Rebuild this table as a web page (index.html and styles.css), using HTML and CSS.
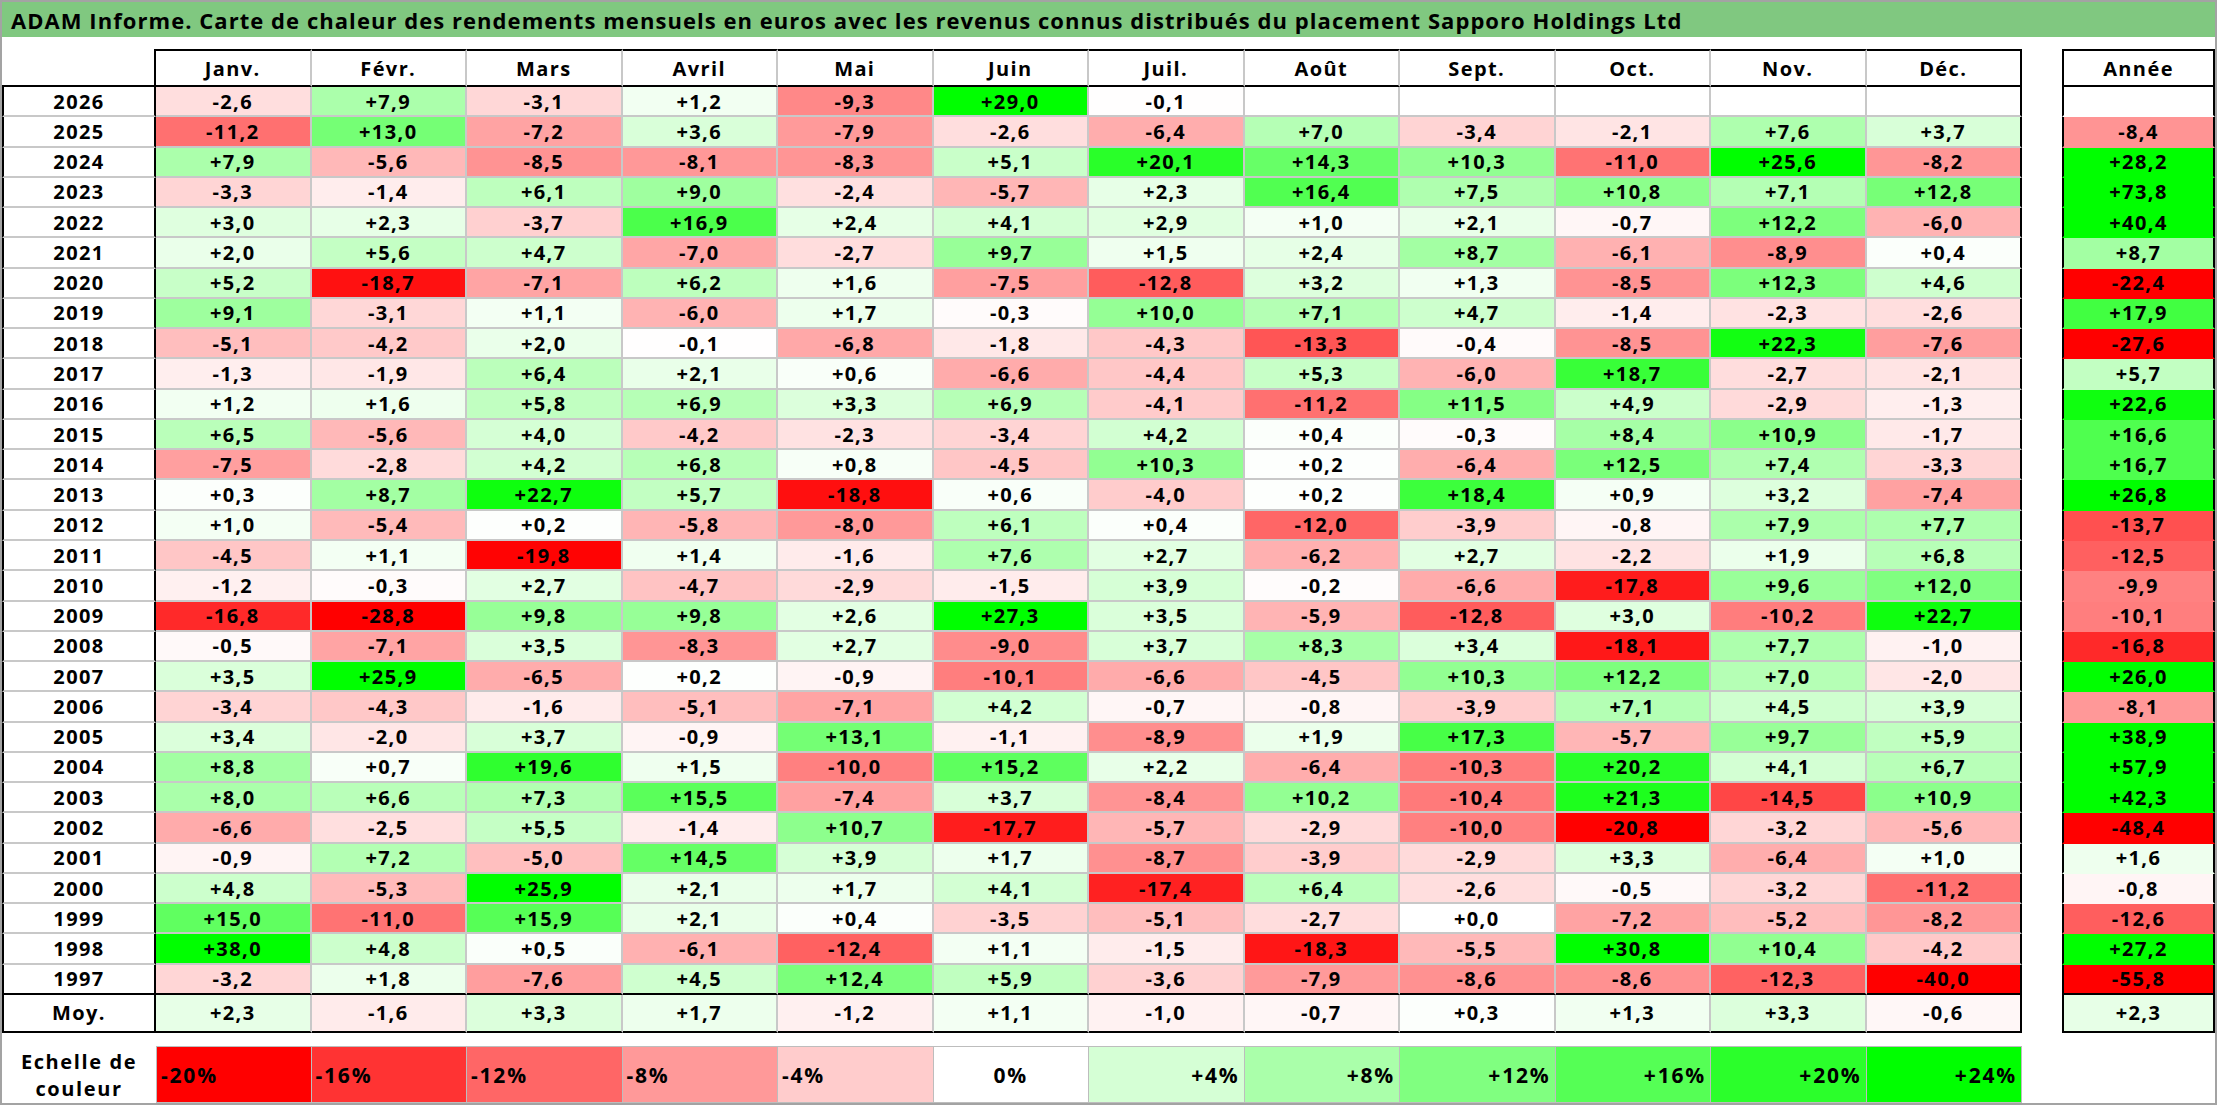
FILE: index.html
```html
<!DOCTYPE html>
<html lang="fr">
<head>
<meta charset="utf-8">
<title>ADAM Informe - Sapporo Holdings Ltd</title>
<link rel="stylesheet" href="styles.css">
</head>
<body>
<div class="page">
  <div class="title">ADAM Informe. Carte de chaleur des rendements mensuels en euros avec les revenus connus distribués du placement Sapporo Holdings Ltd</div>
  <div class="board">
    <div class="row hdr"><div class="cell yr"></div><div class="cell">Janv.</div><div class="cell">Févr.</div><div class="cell">Mars</div><div class="cell">Avril</div><div class="cell">Mai</div><div class="cell">Juin</div><div class="cell">Juil.</div><div class="cell">Août</div><div class="cell">Sept.</div><div class="cell">Oct.</div><div class="cell">Nov.</div><div class="cell">Déc.</div><div class="cell an">Année</div></div>
    <div class="row"><div class="cell yr">2026</div><div class="cell" style="background:rgb(255,222,222)">-2,6</div><div class="cell" style="background:rgb(171,255,171)">+7,9</div><div class="cell" style="background:rgb(255,215,215)">-3,1</div><div class="cell" style="background:rgb(242,255,242)">+1,2</div><div class="cell" style="background:rgb(255,136,136)">-9,3</div><div class="cell" style="background:rgb(0,255,0)">+29,0</div><div class="cell" style="background:rgb(255,254,254)">-0,1</div><div class="cell"></div><div class="cell"></div><div class="cell"></div><div class="cell"></div><div class="cell"></div><div class="cell an"></div></div>
    <div class="row"><div class="cell yr">2025</div><div class="cell" style="background:rgb(255,112,112)">-11,2</div><div class="cell" style="background:rgb(117,255,117)">+13,0</div><div class="cell" style="background:rgb(255,163,163)">-7,2</div><div class="cell" style="background:rgb(217,255,217)">+3,6</div><div class="cell" style="background:rgb(255,154,154)">-7,9</div><div class="cell" style="background:rgb(255,222,222)">-2,6</div><div class="cell" style="background:rgb(255,173,173)">-6,4</div><div class="cell" style="background:rgb(181,255,181)">+7,0</div><div class="cell" style="background:rgb(255,212,212)">-3,4</div><div class="cell" style="background:rgb(255,228,228)">-2,1</div><div class="cell" style="background:rgb(174,255,174)">+7,6</div><div class="cell" style="background:rgb(216,255,216)">+3,7</div><div class="cell an" style="background:rgb(255,148,148)">-8,4</div></div>
    <div class="row"><div class="cell yr">2024</div><div class="cell" style="background:rgb(171,255,171)">+7,9</div><div class="cell" style="background:rgb(255,184,184)">-5,6</div><div class="cell" style="background:rgb(255,147,147)">-8,5</div><div class="cell" style="background:rgb(255,152,152)">-8,1</div><div class="cell" style="background:rgb(255,149,149)">-8,3</div><div class="cell" style="background:rgb(201,255,201)">+5,1</div><div class="cell" style="background:rgb(41,255,41)">+20,1</div><div class="cell" style="background:rgb(103,255,103)">+14,3</div><div class="cell" style="background:rgb(146,255,146)">+10,3</div><div class="cell" style="background:rgb(255,115,115)">-11,0</div><div class="cell" style="background:rgb(0,255,0)">+25,6</div><div class="cell" style="background:rgb(255,150,150)">-8,2</div><div class="cell an" style="background:rgb(0,255,0)">+28,2</div></div>
    <div class="row"><div class="cell yr">2023</div><div class="cell" style="background:rgb(255,213,213)">-3,3</div><div class="cell" style="background:rgb(255,237,237)">-1,4</div><div class="cell" style="background:rgb(190,255,190)">+6,1</div><div class="cell" style="background:rgb(159,255,159)">+9,0</div><div class="cell" style="background:rgb(255,224,224)">-2,4</div><div class="cell" style="background:rgb(255,182,182)">-5,7</div><div class="cell" style="background:rgb(231,255,231)">+2,3</div><div class="cell" style="background:rgb(81,255,81)">+16,4</div><div class="cell" style="background:rgb(175,255,175)">+7,5</div><div class="cell" style="background:rgb(140,255,140)">+10,8</div><div class="cell" style="background:rgb(180,255,180)">+7,1</div><div class="cell" style="background:rgb(119,255,119)">+12,8</div><div class="cell an" style="background:rgb(0,255,0)">+73,8</div></div>
    <div class="row"><div class="cell yr">2022</div><div class="cell" style="background:rgb(223,255,223)">+3,0</div><div class="cell" style="background:rgb(231,255,231)">+2,3</div><div class="cell" style="background:rgb(255,208,208)">-3,7</div><div class="cell" style="background:rgb(75,255,75)">+16,9</div><div class="cell" style="background:rgb(230,255,230)">+2,4</div><div class="cell" style="background:rgb(211,255,211)">+4,1</div><div class="cell" style="background:rgb(224,255,224)">+2,9</div><div class="cell" style="background:rgb(244,255,244)">+1,0</div><div class="cell" style="background:rgb(233,255,233)">+2,1</div><div class="cell" style="background:rgb(255,246,246)">-0,7</div><div class="cell" style="background:rgb(125,255,125)">+12,2</div><div class="cell" style="background:rgb(255,179,179)">-6,0</div><div class="cell an" style="background:rgb(0,255,0)">+40,4</div></div>
    <div class="row"><div class="cell yr">2021</div><div class="cell" style="background:rgb(234,255,234)">+2,0</div><div class="cell" style="background:rgb(196,255,196)">+5,6</div><div class="cell" style="background:rgb(205,255,205)">+4,7</div><div class="cell" style="background:rgb(255,166,166)">-7,0</div><div class="cell" style="background:rgb(255,221,221)">-2,7</div><div class="cell" style="background:rgb(152,255,152)">+9,7</div><div class="cell" style="background:rgb(239,255,239)">+1,5</div><div class="cell" style="background:rgb(230,255,230)">+2,4</div><div class="cell" style="background:rgb(163,255,163)">+8,7</div><div class="cell" style="background:rgb(255,177,177)">-6,1</div><div class="cell" style="background:rgb(255,142,142)">-8,9</div><div class="cell" style="background:rgb(251,255,251)">+0,4</div><div class="cell an" style="background:rgb(163,255,163)">+8,7</div></div>
    <div class="row"><div class="cell yr">2020</div><div class="cell" style="background:rgb(200,255,200)">+5,2</div><div class="cell" style="background:rgb(255,17,17)">-18,7</div><div class="cell" style="background:rgb(255,164,164)">-7,1</div><div class="cell" style="background:rgb(189,255,189)">+6,2</div><div class="cell" style="background:rgb(238,255,238)">+1,6</div><div class="cell" style="background:rgb(255,159,159)">-7,5</div><div class="cell" style="background:rgb(255,92,92)">-12,8</div><div class="cell" style="background:rgb(221,255,221)">+3,2</div><div class="cell" style="background:rgb(241,255,241)">+1,3</div><div class="cell" style="background:rgb(255,147,147)">-8,5</div><div class="cell" style="background:rgb(124,255,124)">+12,3</div><div class="cell" style="background:rgb(206,255,206)">+4,6</div><div class="cell an" style="background:rgb(255,0,0)">-22,4</div></div>
    <div class="row"><div class="cell yr">2019</div><div class="cell" style="background:rgb(158,255,158)">+9,1</div><div class="cell" style="background:rgb(255,215,215)">-3,1</div><div class="cell" style="background:rgb(243,255,243)">+1,1</div><div class="cell" style="background:rgb(255,179,179)">-6,0</div><div class="cell" style="background:rgb(237,255,237)">+1,7</div><div class="cell" style="background:rgb(255,251,251)">-0,3</div><div class="cell" style="background:rgb(149,255,149)">+10,0</div><div class="cell" style="background:rgb(180,255,180)">+7,1</div><div class="cell" style="background:rgb(205,255,205)">+4,7</div><div class="cell" style="background:rgb(255,237,237)">-1,4</div><div class="cell" style="background:rgb(255,226,226)">-2,3</div><div class="cell" style="background:rgb(255,222,222)">-2,6</div><div class="cell an" style="background:rgb(65,255,65)">+17,9</div></div>
    <div class="row"><div class="cell yr">2018</div><div class="cell" style="background:rgb(255,190,190)">-5,1</div><div class="cell" style="background:rgb(255,201,201)">-4,2</div><div class="cell" style="background:rgb(234,255,234)">+2,0</div><div class="cell" style="background:rgb(255,254,254)">-0,1</div><div class="cell" style="background:rgb(255,168,168)">-6,8</div><div class="cell" style="background:rgb(255,232,232)">-1,8</div><div class="cell" style="background:rgb(255,200,200)">-4,3</div><div class="cell" style="background:rgb(255,85,85)">-13,3</div><div class="cell" style="background:rgb(255,250,250)">-0,4</div><div class="cell" style="background:rgb(255,147,147)">-8,5</div><div class="cell" style="background:rgb(18,255,18)">+22,3</div><div class="cell" style="background:rgb(255,158,158)">-7,6</div><div class="cell an" style="background:rgb(255,0,0)">-27,6</div></div>
    <div class="row"><div class="cell yr">2017</div><div class="cell" style="background:rgb(255,238,238)">-1,3</div><div class="cell" style="background:rgb(255,231,231)">-1,9</div><div class="cell" style="background:rgb(187,255,187)">+6,4</div><div class="cell" style="background:rgb(233,255,233)">+2,1</div><div class="cell" style="background:rgb(249,255,249)">+0,6</div><div class="cell" style="background:rgb(255,171,171)">-6,6</div><div class="cell" style="background:rgb(255,199,199)">-4,4</div><div class="cell" style="background:rgb(199,255,199)">+5,3</div><div class="cell" style="background:rgb(255,179,179)">-6,0</div><div class="cell" style="background:rgb(56,255,56)">+18,7</div><div class="cell" style="background:rgb(255,221,221)">-2,7</div><div class="cell" style="background:rgb(255,228,228)">-2,1</div><div class="cell an" style="background:rgb(194,255,194)">+5,7</div></div>
    <div class="row"><div class="cell yr">2016</div><div class="cell" style="background:rgb(242,255,242)">+1,2</div><div class="cell" style="background:rgb(238,255,238)">+1,6</div><div class="cell" style="background:rgb(193,255,193)">+5,8</div><div class="cell" style="background:rgb(182,255,182)">+6,9</div><div class="cell" style="background:rgb(220,255,220)">+3,3</div><div class="cell" style="background:rgb(182,255,182)">+6,9</div><div class="cell" style="background:rgb(255,203,203)">-4,1</div><div class="cell" style="background:rgb(255,112,112)">-11,2</div><div class="cell" style="background:rgb(133,255,133)">+11,5</div><div class="cell" style="background:rgb(203,255,203)">+4,9</div><div class="cell" style="background:rgb(255,218,218)">-2,9</div><div class="cell" style="background:rgb(255,238,238)">-1,3</div><div class="cell an" style="background:rgb(15,255,15)">+22,6</div></div>
    <div class="row"><div class="cell yr">2015</div><div class="cell" style="background:rgb(186,255,186)">+6,5</div><div class="cell" style="background:rgb(255,184,184)">-5,6</div><div class="cell" style="background:rgb(213,255,213)">+4,0</div><div class="cell" style="background:rgb(255,201,201)">-4,2</div><div class="cell" style="background:rgb(255,226,226)">-2,3</div><div class="cell" style="background:rgb(255,212,212)">-3,4</div><div class="cell" style="background:rgb(210,255,210)">+4,2</div><div class="cell" style="background:rgb(251,255,251)">+0,4</div><div class="cell" style="background:rgb(255,251,251)">-0,3</div><div class="cell" style="background:rgb(166,255,166)">+8,4</div><div class="cell" style="background:rgb(139,255,139)">+10,9</div><div class="cell" style="background:rgb(255,233,233)">-1,7</div><div class="cell an" style="background:rgb(79,255,79)">+16,6</div></div>
    <div class="row"><div class="cell yr">2014</div><div class="cell" style="background:rgb(255,159,159)">-7,5</div><div class="cell" style="background:rgb(255,219,219)">-2,8</div><div class="cell" style="background:rgb(210,255,210)">+4,2</div><div class="cell" style="background:rgb(183,255,183)">+6,8</div><div class="cell" style="background:rgb(247,255,247)">+0,8</div><div class="cell" style="background:rgb(255,198,198)">-4,5</div><div class="cell" style="background:rgb(146,255,146)">+10,3</div><div class="cell" style="background:rgb(253,255,253)">+0,2</div><div class="cell" style="background:rgb(255,173,173)">-6,4</div><div class="cell" style="background:rgb(122,255,122)">+12,5</div><div class="cell" style="background:rgb(176,255,176)">+7,4</div><div class="cell" style="background:rgb(255,213,213)">-3,3</div><div class="cell an" style="background:rgb(78,255,78)">+16,7</div></div>
    <div class="row"><div class="cell yr">2013</div><div class="cell" style="background:rgb(252,255,252)">+0,3</div><div class="cell" style="background:rgb(163,255,163)">+8,7</div><div class="cell" style="background:rgb(14,255,14)">+22,7</div><div class="cell" style="background:rgb(194,255,194)">+5,7</div><div class="cell" style="background:rgb(255,15,15)">-18,8</div><div class="cell" style="background:rgb(249,255,249)">+0,6</div><div class="cell" style="background:rgb(255,204,204)">-4,0</div><div class="cell" style="background:rgb(253,255,253)">+0,2</div><div class="cell" style="background:rgb(60,255,60)">+18,4</div><div class="cell" style="background:rgb(245,255,245)">+0,9</div><div class="cell" style="background:rgb(221,255,221)">+3,2</div><div class="cell" style="background:rgb(255,161,161)">-7,4</div><div class="cell an" style="background:rgb(0,255,0)">+26,8</div></div>
    <div class="row"><div class="cell yr">2012</div><div class="cell" style="background:rgb(244,255,244)">+1,0</div><div class="cell" style="background:rgb(255,186,186)">-5,4</div><div class="cell" style="background:rgb(253,255,253)">+0,2</div><div class="cell" style="background:rgb(255,181,181)">-5,8</div><div class="cell" style="background:rgb(255,153,153)">-8,0</div><div class="cell" style="background:rgb(190,255,190)">+6,1</div><div class="cell" style="background:rgb(251,255,251)">+0,4</div><div class="cell" style="background:rgb(255,102,102)">-12,0</div><div class="cell" style="background:rgb(255,205,205)">-3,9</div><div class="cell" style="background:rgb(255,245,245)">-0,8</div><div class="cell" style="background:rgb(171,255,171)">+7,9</div><div class="cell" style="background:rgb(173,255,173)">+7,7</div><div class="cell an" style="background:rgb(255,80,80)">-13,7</div></div>
    <div class="row"><div class="cell yr">2011</div><div class="cell" style="background:rgb(255,198,198)">-4,5</div><div class="cell" style="background:rgb(243,255,243)">+1,1</div><div class="cell" style="background:rgb(255,3,3)">-19,8</div><div class="cell" style="background:rgb(240,255,240)">+1,4</div><div class="cell" style="background:rgb(255,235,235)">-1,6</div><div class="cell" style="background:rgb(174,255,174)">+7,6</div><div class="cell" style="background:rgb(226,255,226)">+2,7</div><div class="cell" style="background:rgb(255,176,176)">-6,2</div><div class="cell" style="background:rgb(226,255,226)">+2,7</div><div class="cell" style="background:rgb(255,227,227)">-2,2</div><div class="cell" style="background:rgb(235,255,235)">+1,9</div><div class="cell" style="background:rgb(183,255,183)">+6,8</div><div class="cell an" style="background:rgb(255,96,96)">-12,5</div></div>
    <div class="row"><div class="cell yr">2010</div><div class="cell" style="background:rgb(255,240,240)">-1,2</div><div class="cell" style="background:rgb(255,251,251)">-0,3</div><div class="cell" style="background:rgb(226,255,226)">+2,7</div><div class="cell" style="background:rgb(255,195,195)">-4,7</div><div class="cell" style="background:rgb(255,218,218)">-2,9</div><div class="cell" style="background:rgb(255,236,236)">-1,5</div><div class="cell" style="background:rgb(214,255,214)">+3,9</div><div class="cell" style="background:rgb(255,252,252)">-0,2</div><div class="cell" style="background:rgb(255,171,171)">-6,6</div><div class="cell" style="background:rgb(255,28,28)">-17,8</div><div class="cell" style="background:rgb(153,255,153)">+9,6</div><div class="cell" style="background:rgb(128,255,128)">+12,0</div><div class="cell an" style="background:rgb(255,129,129)">-9,9</div></div>
    <div class="row"><div class="cell yr">2009</div><div class="cell" style="background:rgb(255,41,41)">-16,8</div><div class="cell" style="background:rgb(255,0,0)">-28,8</div><div class="cell" style="background:rgb(151,255,151)">+9,8</div><div class="cell" style="background:rgb(151,255,151)">+9,8</div><div class="cell" style="background:rgb(227,255,227)">+2,6</div><div class="cell" style="background:rgb(0,255,0)">+27,3</div><div class="cell" style="background:rgb(218,255,218)">+3,5</div><div class="cell" style="background:rgb(255,180,180)">-5,9</div><div class="cell" style="background:rgb(255,92,92)">-12,8</div><div class="cell" style="background:rgb(223,255,223)">+3,0</div><div class="cell" style="background:rgb(255,125,125)">-10,2</div><div class="cell" style="background:rgb(14,255,14)">+22,7</div><div class="cell an" style="background:rgb(255,126,126)">-10,1</div></div>
    <div class="row"><div class="cell yr">2008</div><div class="cell" style="background:rgb(255,249,249)">-0,5</div><div class="cell" style="background:rgb(255,164,164)">-7,1</div><div class="cell" style="background:rgb(218,255,218)">+3,5</div><div class="cell" style="background:rgb(255,149,149)">-8,3</div><div class="cell" style="background:rgb(226,255,226)">+2,7</div><div class="cell" style="background:rgb(255,140,140)">-9,0</div><div class="cell" style="background:rgb(216,255,216)">+3,7</div><div class="cell" style="background:rgb(167,255,167)">+8,3</div><div class="cell" style="background:rgb(219,255,219)">+3,4</div><div class="cell" style="background:rgb(255,24,24)">-18,1</div><div class="cell" style="background:rgb(173,255,173)">+7,7</div><div class="cell" style="background:rgb(255,242,242)">-1,0</div><div class="cell an" style="background:rgb(255,41,41)">-16,8</div></div>
    <div class="row"><div class="cell yr">2007</div><div class="cell" style="background:rgb(218,255,218)">+3,5</div><div class="cell" style="background:rgb(0,255,0)">+25,9</div><div class="cell" style="background:rgb(255,172,172)">-6,5</div><div class="cell" style="background:rgb(253,255,253)">+0,2</div><div class="cell" style="background:rgb(255,244,244)">-0,9</div><div class="cell" style="background:rgb(255,126,126)">-10,1</div><div class="cell" style="background:rgb(255,171,171)">-6,6</div><div class="cell" style="background:rgb(255,198,198)">-4,5</div><div class="cell" style="background:rgb(146,255,146)">+10,3</div><div class="cell" style="background:rgb(125,255,125)">+12,2</div><div class="cell" style="background:rgb(181,255,181)">+7,0</div><div class="cell" style="background:rgb(255,230,230)">-2,0</div><div class="cell an" style="background:rgb(0,255,0)">+26,0</div></div>
    <div class="row"><div class="cell yr">2006</div><div class="cell" style="background:rgb(255,212,212)">-3,4</div><div class="cell" style="background:rgb(255,200,200)">-4,3</div><div class="cell" style="background:rgb(255,235,235)">-1,6</div><div class="cell" style="background:rgb(255,190,190)">-5,1</div><div class="cell" style="background:rgb(255,164,164)">-7,1</div><div class="cell" style="background:rgb(210,255,210)">+4,2</div><div class="cell" style="background:rgb(255,246,246)">-0,7</div><div class="cell" style="background:rgb(255,245,245)">-0,8</div><div class="cell" style="background:rgb(255,205,205)">-3,9</div><div class="cell" style="background:rgb(180,255,180)">+7,1</div><div class="cell" style="background:rgb(207,255,207)">+4,5</div><div class="cell" style="background:rgb(214,255,214)">+3,9</div><div class="cell an" style="background:rgb(255,152,152)">-8,1</div></div>
    <div class="row"><div class="cell yr">2005</div><div class="cell" style="background:rgb(219,255,219)">+3,4</div><div class="cell" style="background:rgb(255,230,230)">-2,0</div><div class="cell" style="background:rgb(216,255,216)">+3,7</div><div class="cell" style="background:rgb(255,244,244)">-0,9</div><div class="cell" style="background:rgb(116,255,116)">+13,1</div><div class="cell" style="background:rgb(255,241,241)">-1,1</div><div class="cell" style="background:rgb(255,142,142)">-8,9</div><div class="cell" style="background:rgb(235,255,235)">+1,9</div><div class="cell" style="background:rgb(71,255,71)">+17,3</div><div class="cell" style="background:rgb(255,182,182)">-5,7</div><div class="cell" style="background:rgb(152,255,152)">+9,7</div><div class="cell" style="background:rgb(192,255,192)">+5,9</div><div class="cell an" style="background:rgb(0,255,0)">+38,9</div></div>
    <div class="row"><div class="cell yr">2004</div><div class="cell" style="background:rgb(162,255,162)">+8,8</div><div class="cell" style="background:rgb(248,255,248)">+0,7</div><div class="cell" style="background:rgb(47,255,47)">+19,6</div><div class="cell" style="background:rgb(239,255,239)">+1,5</div><div class="cell" style="background:rgb(255,128,128)">-10,0</div><div class="cell" style="background:rgb(94,255,94)">+15,2</div><div class="cell" style="background:rgb(232,255,232)">+2,2</div><div class="cell" style="background:rgb(255,173,173)">-6,4</div><div class="cell" style="background:rgb(255,124,124)">-10,3</div><div class="cell" style="background:rgb(40,255,40)">+20,2</div><div class="cell" style="background:rgb(211,255,211)">+4,1</div><div class="cell" style="background:rgb(184,255,184)">+6,7</div><div class="cell an" style="background:rgb(0,255,0)">+57,9</div></div>
    <div class="row"><div class="cell yr">2003</div><div class="cell" style="background:rgb(170,255,170)">+8,0</div><div class="cell" style="background:rgb(185,255,185)">+6,6</div><div class="cell" style="background:rgb(177,255,177)">+7,3</div><div class="cell" style="background:rgb(90,255,90)">+15,5</div><div class="cell" style="background:rgb(255,161,161)">-7,4</div><div class="cell" style="background:rgb(216,255,216)">+3,7</div><div class="cell" style="background:rgb(255,148,148)">-8,4</div><div class="cell" style="background:rgb(147,255,147)">+10,2</div><div class="cell" style="background:rgb(255,122,122)">-10,4</div><div class="cell" style="background:rgb(29,255,29)">+21,3</div><div class="cell" style="background:rgb(255,70,70)">-14,5</div><div class="cell" style="background:rgb(139,255,139)">+10,9</div><div class="cell an" style="background:rgb(0,255,0)">+42,3</div></div>
    <div class="row"><div class="cell yr">2002</div><div class="cell" style="background:rgb(255,171,171)">-6,6</div><div class="cell" style="background:rgb(255,223,223)">-2,5</div><div class="cell" style="background:rgb(197,255,197)">+5,5</div><div class="cell" style="background:rgb(255,237,237)">-1,4</div><div class="cell" style="background:rgb(141,255,141)">+10,7</div><div class="cell" style="background:rgb(255,29,29)">-17,7</div><div class="cell" style="background:rgb(255,182,182)">-5,7</div><div class="cell" style="background:rgb(255,218,218)">-2,9</div><div class="cell" style="background:rgb(255,128,128)">-10,0</div><div class="cell" style="background:rgb(255,0,0)">-20,8</div><div class="cell" style="background:rgb(255,214,214)">-3,2</div><div class="cell" style="background:rgb(255,184,184)">-5,6</div><div class="cell an" style="background:rgb(255,0,0)">-48,4</div></div>
    <div class="row"><div class="cell yr">2001</div><div class="cell" style="background:rgb(255,244,244)">-0,9</div><div class="cell" style="background:rgb(179,255,179)">+7,2</div><div class="cell" style="background:rgb(255,191,191)">-5,0</div><div class="cell" style="background:rgb(101,255,101)">+14,5</div><div class="cell" style="background:rgb(214,255,214)">+3,9</div><div class="cell" style="background:rgb(237,255,237)">+1,7</div><div class="cell" style="background:rgb(255,144,144)">-8,7</div><div class="cell" style="background:rgb(255,205,205)">-3,9</div><div class="cell" style="background:rgb(255,218,218)">-2,9</div><div class="cell" style="background:rgb(220,255,220)">+3,3</div><div class="cell" style="background:rgb(255,173,173)">-6,4</div><div class="cell" style="background:rgb(244,255,244)">+1,0</div><div class="cell an" style="background:rgb(238,255,238)">+1,6</div></div>
    <div class="row"><div class="cell yr">2000</div><div class="cell" style="background:rgb(204,255,204)">+4,8</div><div class="cell" style="background:rgb(255,187,187)">-5,3</div><div class="cell" style="background:rgb(0,255,0)">+25,9</div><div class="cell" style="background:rgb(233,255,233)">+2,1</div><div class="cell" style="background:rgb(237,255,237)">+1,7</div><div class="cell" style="background:rgb(211,255,211)">+4,1</div><div class="cell" style="background:rgb(255,33,33)">-17,4</div><div class="cell" style="background:rgb(187,255,187)">+6,4</div><div class="cell" style="background:rgb(255,222,222)">-2,6</div><div class="cell" style="background:rgb(255,249,249)">-0,5</div><div class="cell" style="background:rgb(255,214,214)">-3,2</div><div class="cell" style="background:rgb(255,112,112)">-11,2</div><div class="cell an" style="background:rgb(255,245,245)">-0,8</div></div>
    <div class="row"><div class="cell yr">1999</div><div class="cell" style="background:rgb(96,255,96)">+15,0</div><div class="cell" style="background:rgb(255,115,115)">-11,0</div><div class="cell" style="background:rgb(86,255,86)">+15,9</div><div class="cell" style="background:rgb(233,255,233)">+2,1</div><div class="cell" style="background:rgb(251,255,251)">+0,4</div><div class="cell" style="background:rgb(255,210,210)">-3,5</div><div class="cell" style="background:rgb(255,190,190)">-5,1</div><div class="cell" style="background:rgb(255,221,221)">-2,7</div><div class="cell">+0,0</div><div class="cell" style="background:rgb(255,163,163)">-7,2</div><div class="cell" style="background:rgb(255,189,189)">-5,2</div><div class="cell" style="background:rgb(255,150,150)">-8,2</div><div class="cell an" style="background:rgb(255,94,94)">-12,6</div></div>
    <div class="row"><div class="cell yr">1998</div><div class="cell" style="background:rgb(0,255,0)">+38,0</div><div class="cell" style="background:rgb(204,255,204)">+4,8</div><div class="cell" style="background:rgb(250,255,250)">+0,5</div><div class="cell" style="background:rgb(255,177,177)">-6,1</div><div class="cell" style="background:rgb(255,97,97)">-12,4</div><div class="cell" style="background:rgb(243,255,243)">+1,1</div><div class="cell" style="background:rgb(255,236,236)">-1,5</div><div class="cell" style="background:rgb(255,22,22)">-18,3</div><div class="cell" style="background:rgb(255,185,185)">-5,5</div><div class="cell" style="background:rgb(0,255,0)">+30,8</div><div class="cell" style="background:rgb(145,255,145)">+10,4</div><div class="cell" style="background:rgb(255,201,201)">-4,2</div><div class="cell an" style="background:rgb(0,255,0)">+27,2</div></div>
    <div class="row end"><div class="cell yr">1997</div><div class="cell" style="background:rgb(255,214,214)">-3,2</div><div class="cell" style="background:rgb(236,255,236)">+1,8</div><div class="cell" style="background:rgb(255,158,158)">-7,6</div><div class="cell" style="background:rgb(207,255,207)">+4,5</div><div class="cell" style="background:rgb(123,255,123)">+12,4</div><div class="cell" style="background:rgb(192,255,192)">+5,9</div><div class="cell" style="background:rgb(255,209,209)">-3,6</div><div class="cell" style="background:rgb(255,154,154)">-7,9</div><div class="cell" style="background:rgb(255,145,145)">-8,6</div><div class="cell" style="background:rgb(255,145,145)">-8,6</div><div class="cell" style="background:rgb(255,98,98)">-12,3</div><div class="cell" style="background:rgb(255,0,0)">-40,0</div><div class="cell an" style="background:rgb(255,0,0)">-55,8</div></div>
    <div class="row avg"><div class="cell yr">Moy.</div><div class="cell" style="background:rgb(231,255,231)">+2,3</div><div class="cell" style="background:rgb(255,235,235)">-1,6</div><div class="cell" style="background:rgb(220,255,220)">+3,3</div><div class="cell" style="background:rgb(237,255,237)">+1,7</div><div class="cell" style="background:rgb(255,240,240)">-1,2</div><div class="cell" style="background:rgb(243,255,243)">+1,1</div><div class="cell" style="background:rgb(255,242,242)">-1,0</div><div class="cell" style="background:rgb(255,246,246)">-0,7</div><div class="cell" style="background:rgb(252,255,252)">+0,3</div><div class="cell" style="background:rgb(241,255,241)">+1,3</div><div class="cell" style="background:rgb(220,255,220)">+3,3</div><div class="cell" style="background:rgb(255,247,247)">-0,6</div><div class="cell an" style="background:rgb(231,255,231)">+2,3</div></div>
  </div>
  <div class="scale">
    <div class="lab">Echelle de<br>couleur</div>
    <div class="sw neg" style="background:rgb(255,0,0)">-20%</div>
    <div class="sw neg" style="background:rgb(255,51,51)">-16%</div>
    <div class="sw neg" style="background:rgb(255,102,102)">-12%</div>
    <div class="sw neg" style="background:rgb(255,153,153)">-8%</div>
    <div class="sw neg" style="background:rgb(255,204,204)">-4%</div>
    <div class="sw zero">0%</div>
    <div class="sw pos" style="background:rgb(213,255,213)">+4%</div>
    <div class="sw pos" style="background:rgb(170,255,170)">+8%</div>
    <div class="sw pos" style="background:rgb(128,255,128)">+12%</div>
    <div class="sw pos" style="background:rgb(85,255,85)">+16%</div>
    <div class="sw pos" style="background:rgb(43,255,43)">+20%</div>
    <div class="sw pos" style="background:rgb(0,255,0)">+24%</div>
  </div>
</div>
</body>
</html>
```

FILE: styles.css
```css
* {
  box-sizing: border-box;
}

html,
body {
  margin: 0;
  padding: 0;
}

body {
  font-family: "Open Sans", "Liberation Sans", sans-serif;
  font-weight: 700;
  color: #000;
  background: #fff;
}

.page {
  width: 2217px;
  height: 1105px;
  border: 2px solid #a3a3a3;
  overflow: hidden;
}

.title {
  height: 35px;
  background: #80c880;
  padding-left: 9px;
  font-size: 22px;
  letter-spacing: 1.05px;
  display: flex;
  align-items: center;
  white-space: nowrap;
}

.board {
  margin-top: 12px;
  height: 984px;
  display: grid;
  grid-template-rows: 38px repeat(30, 1fr) 38px;
}

.row {
  display: grid;
  grid-template-columns: 154px repeat(12, 155.5px) 40px 153px;
  font-size: 20px;
  letter-spacing: 1.4px;
}

.cell {
  display: flex;
  align-items: center;
  justify-content: center;
  border-right: 2px solid #c8c8c8;
  border-bottom: 2px solid #c8c8c8;
  white-space: nowrap;
}

.yr {
  border-left: 2px solid #000;
  border-right-color: #000;
}

.row > .cell:nth-child(13) {
  border-right-color: #000;
}

.an {
  grid-column: 15;
  border-left: 2px solid #000;
  border-right: 2px solid #000;
  border-bottom-color: transparent;
}

.hdr .cell {
  border-top: 2px solid #000;
  border-bottom-color: #000;
}

.hdr .yr {
  border-top: 0;
  border-left: 0;
}

.end .cell,
.avg .cell {
  border-bottom-color: #000;
}

.scale {
  margin-top: 13px;
  height: 57px;
  display: grid;
  grid-template-columns: 154px repeat(12, 155.5px);
  font-size: 21px;
  letter-spacing: 1.8px;
}

.lab {
  display: flex;
  align-items: center;
  justify-content: center;
  text-align: center;
  font-size: 20px;
  line-height: 27px;
  letter-spacing: 1.6px;
}

.sw {
  display: flex;
  align-items: center;
  padding: 0 4px;
  border: 1px solid #bdbdbd;
  border-left: 0;
}

.sw:nth-child(2) {
  border-left: 1px solid #bdbdbd;
}

.sw.neg {
  justify-content: flex-start;
}

.sw.zero {
  justify-content: center;
}

.sw.pos {
  justify-content: flex-end;
}
```
